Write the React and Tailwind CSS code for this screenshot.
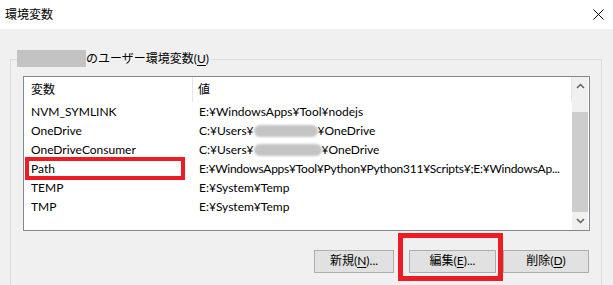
const rows = [
  { name: "NVM_SYMLINK", value: "E:¥WindowsApps¥Tool¥nodejs" },
  { name: "OneDrive", value: "onedrive", blob: "w-[64px]" },
  { name: "OneDriveConsumer", value: "onedrive", blob: "w-[68px]" },
  {
    name: "Path",
    value: "E:¥WindowsApps¥Tool¥Python¥Python311¥Scripts¥;E:¥WindowsAp...",
    mark: true,
  },
  { name: "TEMP", value: "E:¥System¥Temp" },
  { name: "TMP", value: "E:¥System¥Temp" },
];

const Btn = ({ label, k, mark }) => (
  <div className="relative">
    <button className="h-[23px] w-full border border-[#adadad] bg-[#e1e1e1] text-[12px] leading-none text-black">
      {label}(<span className="underline underline-offset-2">{k}</span>)
      {k === "D" ? "" : "..."}
    </button>
    {mark && (
      <span className="absolute left-[-11px] top-[-14px] h-[48px] w-[105px] border-[5px] border-[#ed1c24]" />
    )}
  </div>
);

const App = () => {
  return (
    <div
      className="h-[285px] w-[613px] overflow-hidden bg-[#f0f0f0] text-black"
      style={{ fontFamily: "Lato, 'Noto Sans CJK JP', sans-serif" }}
    >
      {/* Title bar */}
      <div className="flex h-[29px] items-center justify-between bg-white pl-[5px] pr-[9px]">
        <span className="text-[12px]">環境変数</span>
        <svg width="11" height="11" viewBox="0 0 11 11">
          <path d="M0.5 0.5 L10.5 10.5 M10.5 0.5 L0.5 10.5" stroke="#000" strokeWidth="1" />
        </svg>
      </div>

      {/* Group box */}
      <div className="ml-[10px] mr-[11px] mt-[30px] h-[240px] border border-[#dcdcdc]">
        <div className="relative">
          <div className="absolute left-[6px] top-[-10px] flex h-[17px] items-center bg-[#f0f0f0] pr-[2px]">
            <span className="h-[17px] w-[69px] bg-[#c3c3c3]" />
            <span className="text-[12px] leading-none">
              のユーザー環境変数(<span className="underline underline-offset-2">U</span>)
            </span>
          </div>
        </div>

        {/* List box */}
        <div className="ml-[12px] mt-[16px] flex h-[155px] w-[567px] border border-[#828790] bg-white">
          <div className="w-[548px] shrink-0 overflow-hidden text-[12px]">
            <div className="flex h-[25px] items-center">
              <div className="flex h-full w-[169px] shrink-0 items-center border-r border-[#e5e5e5] pl-[7px]">変数</div>
              <div className="flex h-full flex-1 items-center border-r border-[#e5e5e5] pl-[5px]">値</div>
            </div>
            {rows.map((r) => (
              <div key={r.name} className="relative flex h-[19px] items-center whitespace-nowrap">
                <div className="w-[170px] shrink-0 pl-[7px]">{r.name}</div>
                <div
                  className={`flex w-[375px] shrink-0 items-center pl-[5px] ${
                    r.mark ? "tracking-[-0.25px]" : ""
                  }`}
                >
                  {r.value === "onedrive" ? (
                    <>
                      C:¥Users¥
                      <span className={`${r.blob} h-[12px] rounded-full bg-[#c4c4c4] blur-[1px]`} />
                      ¥OneDrive
                    </>
                  ) : (
                    r.value
                  )}
                </div>
                {r.mark && (
                  <span className="absolute left-[1px] top-[-2px] h-[23px] w-[160px] border-[4px] border-[#ed1c24]" />
                )}
              </div>
            ))}
          </div>

          {/* Scrollbar */}
          <div className="flex w-[16px] flex-col bg-[#f0f0f0]">
            <div className="flex h-[17px] items-center justify-center">
              <svg width="9" height="6" viewBox="0 0 9 6">
                <path d="M1 5 L4.5 1.5 L8 5" fill="none" stroke="#606060" strokeWidth="1.5" />
              </svg>
            </div>
            <div className="h-[18px]" />
            <div className="h-[100px] bg-[#cdcdcd]" />
            <div className="flex h-[17px] items-center justify-center">
              <svg width="9" height="6" viewBox="0 0 9 6">
                <path d="M1 1 L4.5 4.5 L8 1" fill="none" stroke="#606060" strokeWidth="1.5" />
              </svg>
            </div>
          </div>
        </div>

        {/* Buttons */}
        <div className="mt-[16px] flex justify-end pr-[12px]">
          <div className="w-[80px]">
            <Btn label="新規" k="N" />
          </div>
          <div className="ml-[15px] w-[87px]">
            <Btn label="編集" k="E" mark />
          </div>
          <div className="ml-[7px] w-[86px]">
            <Btn label="削除" k="D" />
          </div>
        </div>
      </div>
    </div>
  );
};

export default App;
